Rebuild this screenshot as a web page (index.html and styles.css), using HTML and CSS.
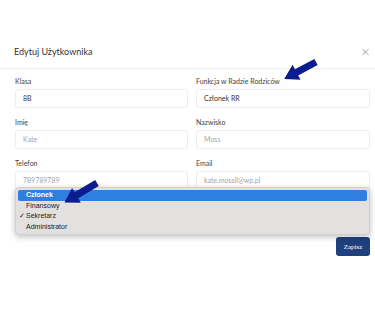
FILE: index.html
```html
<!DOCTYPE html>
<html>
<head>
    <meta charset="utf-8">
    <title>Edytuj Użytkownika</title>
    <link rel="stylesheet" href="styles.css">
</head>
<body>
    <div class="modal">
        <div class="modal-header">
            <h2 class="modal-title">Edytuj Użytkownika</h2>
            <span class="close">&times;</span>
        </div>
        <div class="modal-body">
            <div class="group">
                <label>Klasa</label>
                <div class="field">8B</div>
            </div>
            <div class="group">
                <label>Funkcja w Radzie Rodziców</label>
                <div class="field">Członek RR</div>
            </div>
            <div class="group">
                <label>Imię</label>
                <div class="field placeholder">Kate</div>
            </div>
            <div class="group">
                <label>Nazwisko</label>
                <div class="field placeholder">Moss</div>
            </div>
            <div class="group">
                <label>Telefon</label>
                <div class="field placeholder">789789789</div>
            </div>
            <div class="group">
                <label>Email</label>
                <div class="field placeholder">kate.mossll@wp.pl</div>
            </div>
        </div>
        <div class="modal-footer">
            <button class="btn-save">Zapisz</button>
        </div>
    </div>

    <!-- otwarta lista wyboru -->
    <ul class="dropdown">
        <li class="active">Członek</li>
        <li>Finansowy</li>
        <li class="checked">Sekretarz</li>
        <li>Administrator</li>
    </ul>

    <svg class="arrows" width="375" height="315" viewBox="0 0 375 315">
        <g transform="translate(316 62) rotate(152)">
            <polygon points="0,-3.5 22,-3.5 22,-8.5 36,0 22,8.5 22,3.5 0,3.5" fill="#0b1c8c"/>
        </g>
        <g transform="translate(97 183) rotate(149)">
            <polygon points="0,-3.5 24,-3.5 24,-8.5 38,0 24,8.5 24,3.5 0,3.5" fill="#0b1c8c"/>
        </g>
    </svg>
</body>
</html>
```

FILE: styles.css
```css
body {
    margin: 0;
    padding: 0;
    background: #fff;
    font-family: Lato, "Open Sans", sans-serif;
    color: #333;
    width: 375px;
    height: 315px;
    overflow: hidden;
    position: relative;
}

.modal-header {
    display: flex;
    justify-content: space-between;
    align-items: center;
    padding: 45px 4px 9px 14px;
    border-bottom: 1px solid #ececec;
}

.modal-title {
    margin: 0;
    font-size: 9px;
    font-weight: normal;
    line-height: 14px;
    color: #333;
}

.close {
    font-size: 13px;
    line-height: 14px;
    color: #999;
    font-family: "DejaVu Sans", sans-serif;
    font-weight: 200;
}

.modal-body {
    display: grid;
    grid-template-columns: 173px 174px;
    column-gap: 8px;
    row-gap: 9px;
    padding: 7px 5px 0 15px;
}

.group label {
    display: block;
    font-size: 7px;
    line-height: 10px;
    color: #444;
    margin-bottom: 3px;
}

.field {
    box-sizing: border-box;
    height: 19px;
    padding: 0 7px;
    border: 1px solid #ededed;
    border-radius: 3px;
    font-size: 7px;
    line-height: 17px;
    color: #333;
}

.field.placeholder {
    color: #a5a5a5;
}

.modal-footer {
    display: flex;
    justify-content: flex-end;
    padding: 47px 5px 0 0;
}

.btn-save {
    width: 34px;
    height: 19px;
    padding: 0;
    border: none;
    border-radius: 3px;
    background: #1f407e;
    color: #fff;
    font-family: "Liberation Serif", serif;
    font-size: 7px;
}

.dropdown {
    position: absolute;
    left: 15px;
    top: 187px;
    width: 355px;
    height: 48px;
    box-sizing: border-box;
    margin: 0;
    padding: 2px 2px;
    list-style: none;
    background: #e3e1df;
    border: 1px solid #d2d0ce;
    border-radius: 4px;
    box-shadow: 0 2px 6px rgba(0, 0, 0, 0.25);
    font-family: "Liberation Sans", Arial, sans-serif;
    font-size: 7px;
}

.dropdown li {
    height: 10.5px;
    line-height: 10.5px;
    padding-left: 8px;
    color: #222;
    border-radius: 2px;
    position: relative;
}

.dropdown li.active {
    background: #2f7fe1;
    color: #fff;
    font-weight: bold;
}

.dropdown li.checked::before {
    content: "\2713";
    position: absolute;
    left: 1px;
    font-family: "DejaVu Sans", sans-serif;
    font-size: 7px;
}

.arrows {
    position: absolute;
    left: 0;
    top: 0;
}
```
